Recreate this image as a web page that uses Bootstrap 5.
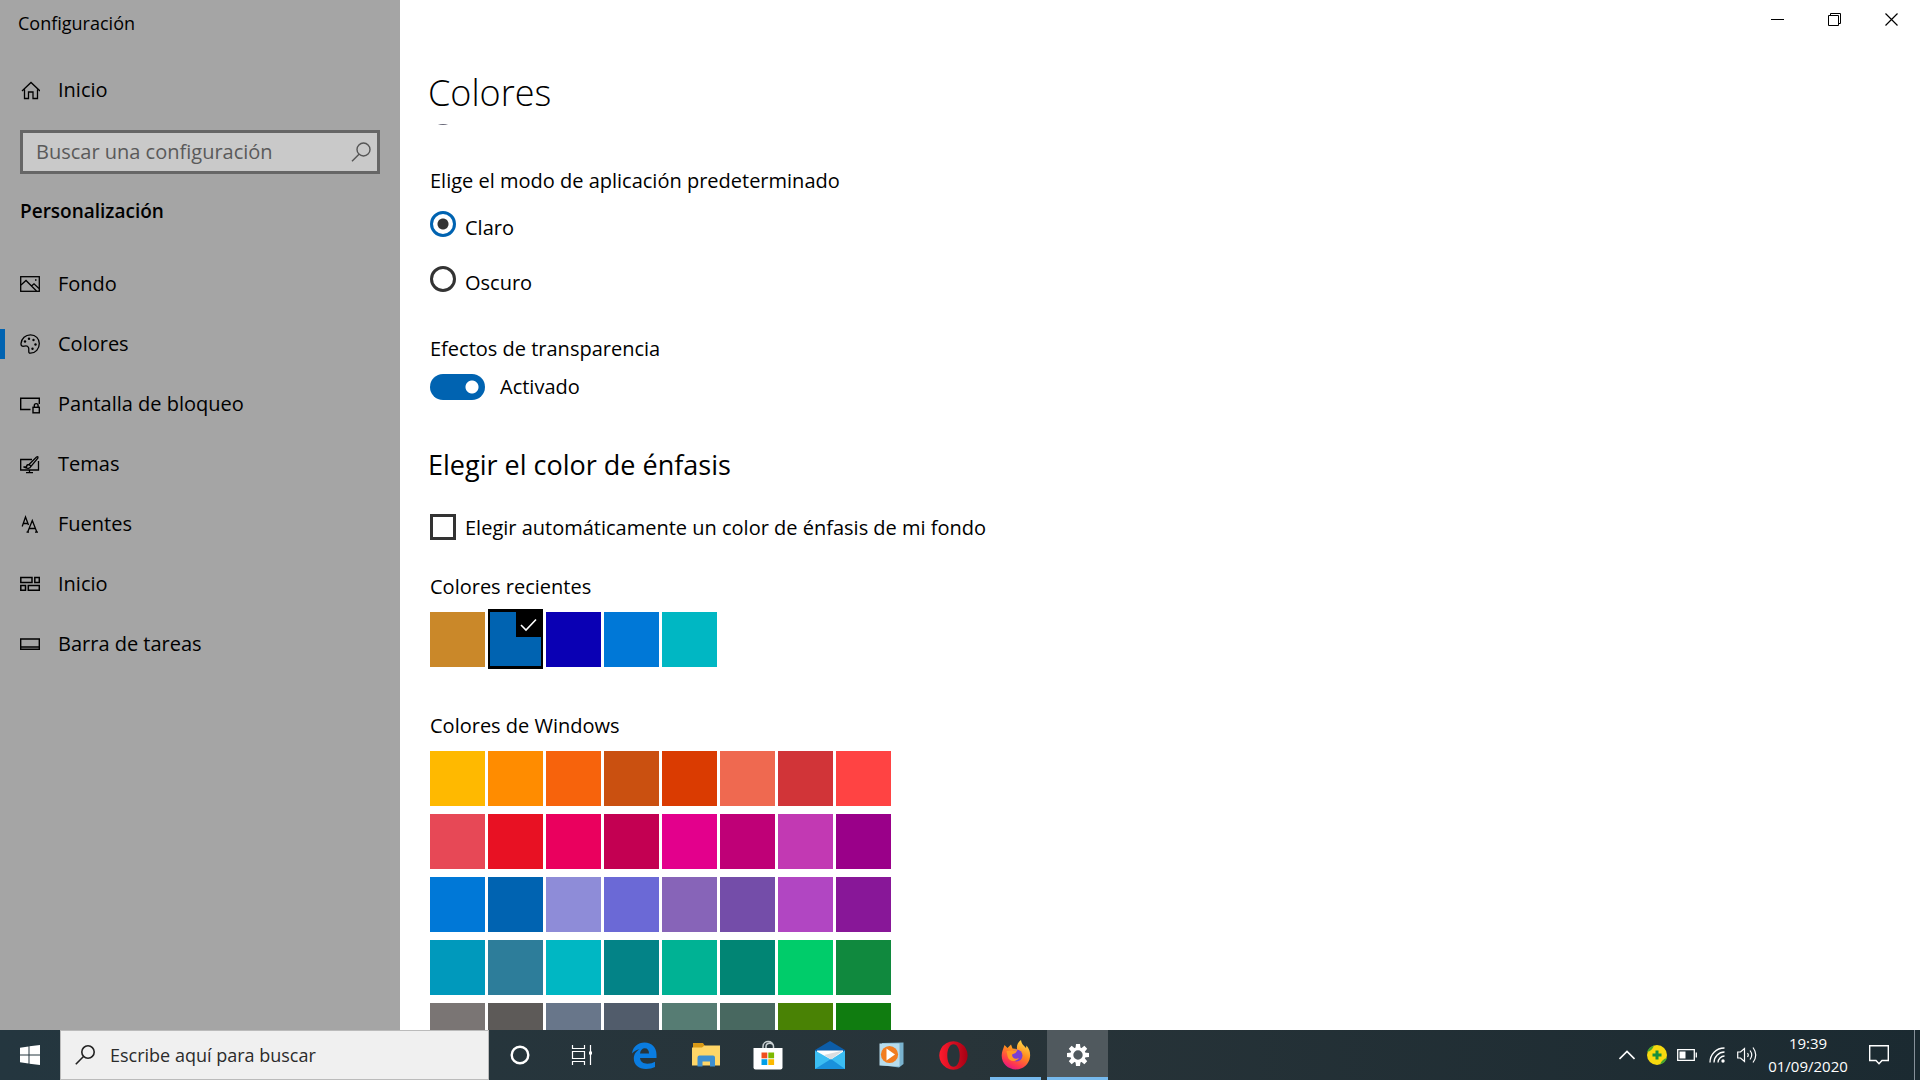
<!DOCTYPE html>
<html lang="es">
<head>
<meta charset="utf-8">
<meta name="viewport" content="width=device-width, initial-scale=1">
<title>Configuración</title>
<link href="https://cdn.jsdelivr.net/npm/bootstrap@5.3.0/dist/css/bootstrap.min.css" rel="stylesheet">
<style>
  :root { --accent: #0063b1; }
  body { font-family: "Open Sans", "Noto Sans", sans-serif; font-size: 20px; line-height: 26px; color: #000; background: #fff; }
  button { color: inherit; }
  svg { display: block; flex: none; }
  .stroke-icon { fill: none; stroke: currentColor; }

  .side-pane { width: 400px; background: #a5a5a5; flex: none; }
  .app-title { font-size: 18px; padding: 10px 18px 0; }
  .side-link { display: flex; align-items: center; gap: 18px; height: 60px; padding-left: 20px; color: #000; text-decoration: none; position: relative; }
  .side-link.home-link { margin-top: 24px; }
  .side-link.current::before { content: ""; position: absolute; left: 0; top: 15px; width: 5px; height: 30px; background: var(--accent); }
  .find-box { margin: 10px 20px 0; height: 44px; border: 3px solid #666; background: #c9c9c9; padding: 0 6px 0 13px; color: #555; }
  .find-box input, .task-find input { border: 0; background: transparent; outline: 0; padding: 0; min-width: 0; color: inherit; }
  .find-box input::placeholder { color: #5a5a5a; opacity: 1; }
  .side-heading { font-size: 19px; line-height: 26px; font-weight: 600; margin: 24px 20px 30px; }

  .win-btn { width: 57px; height: 38px; border: 0; background: transparent; }
  .page-title { font-size: 36px; line-height: 48px; font-weight: 300; margin: 31px 0 7px 28px; }
  .scroller { padding-left: 30px; }
  .cut-ring { width: 26px; height: 26px; border: 2px solid #667; border-radius: 50%; margin-top: -25px; }
  .mode-group { margin-top: 43px; }
  .field-label { margin: 0; font-size: 20px; line-height: 26px; font-weight: 400; }
  .mode-group .field-label { float: none; margin-bottom: 17px; }
  .opt-row { display: flex; gap: 9px; align-items: flex-start; height: 30px; }
  .opt-row + .opt-row { margin-top: 25px; }
  .opt-row label { padding-top: 4px; }
  .opt-row input { appearance: none; width: 26px; height: 26px; margin: 0; flex: none; border: 3px solid #333; background: #fff; }
  .opt-row input[type=radio] { border-radius: 50%; }
  .opt-row input[type=radio]:checked { border-color: var(--accent); background: radial-gradient(circle, #333 0 5px, #fff 6px); }
  .check-row { margin-top: 31px; }
  .opt-row.check-row label { padding-top: 1px; }
  .effects-group { margin-top: 40px; }
  .switch-row { margin-top: 12px; gap: 15px; }
  .switch-input { appearance: none; width: 55px; height: 26px; margin: 0; border-radius: 13px; background: radial-gradient(circle at 42px 13px, #fff 0 6px, var(--accent) 7px); flex: none; }
  .section-title { font-size: 27px; line-height: 36px; font-weight: 400; margin: 47px 0 0 -2px; }
  .recent-label { margin: 30px 0 12px; }
  .windows-label { margin: 46px 0 12px; }
  .swatches { display: grid; grid-template-columns: repeat(8, 55px); gap: 8px 3px; }
  .swatch { height: 55px; border: 0; padding: 0; position: relative; }
  .swatch.chosen { box-shadow: inset 2px 0 #000, inset -2px 0 #000, 0 -3px #000, 0 2px #000, inset 0 -1px #000; }
  .swatch .tick { position: absolute; top: 0; right: 2px; width: 25px; height: 25px; background: #000; color: #fff; }

  .task-bar { height: 50px; background: linear-gradient(90deg, #24363f, #283439 50%, #1b2a31); color: #fff; flex: none; }
  .start-btn { width: 60px; }
  .task-find { width: 429px; background: #f0f0f0; border: 1px solid #bbb; color: #222; padding-left: 14px; font-size: 18px; gap: 15px; }
  .task-find input::placeholder { color: #2b2b2b; opacity: 1; }
  .task-list { display: flex; gap: 1px; }
  .task-btn { width: 61px; }
  .task-btn, .tray-btn, .start-btn, .note-btn, .clock-btn { border: 0; background: transparent; padding: 0; display: flex; align-items: center; justify-content: center; position: relative; }
  .task-btn.running::after { content: ""; position: absolute; bottom: 0; left: 5px; right: 5px; height: 3px; background: #76b9ed; }
  .task-btn.focused { background: #50595e; }
  .task-btn.focused::after { left: 0; right: 0; }
  .tray-btn { width: 30px; }
  .clock-btn { width: 92px; flex-direction: column; font-size: 15px; line-height: 23px; }
  .note-btn { width: 50px; margin-right: 10px; }
  .peek { width: 6px; border-left: 1px solid #87919a; }
</style>
<script src="https://cdn.jsdelivr.net/npm/bootstrap@5.3.0/dist/js/bootstrap.bundle.min.js"></script>
</head>
<body>
<div class="d-flex flex-column vh-100 overflow-hidden">
  <div class="d-flex flex-grow-1 overflow-hidden">

    <aside class="side-pane">
      <div class="app-title">Configuración</div>
      <a class="side-link home-link" href="#inicio">
        <svg class="stroke-icon" width="20" height="20" viewBox="0 0 20 20" stroke-width="1.3"><path d="M2 11L11 2.500L20 11M4.500 9.500V18.500H8.500V12H13V18.500H17.500V9.500"/></svg>
        Inicio
      </a>
      <div class="find-box d-flex align-items-center">
        <input class="flex-grow-1" type="text" placeholder="Buscar una configuración" aria-label="Buscar una configuración">
        <svg class="stroke-icon" width="20" height="20" viewBox="0 0 20 20" stroke-width="1.4"><circle cx="12.500" cy="7.500" r="6.500"/><path d="M8 12.200L1 19.200"/></svg>
      </div>
      <h2 class="side-heading">Personalización</h2>
      <nav>
        <a class="side-link" href="#fondo">
          <svg class="stroke-icon" width="20" height="20" viewBox="0 0 20 20" stroke-width="1.300"><rect x=".7" y="2.700" width="18.600" height="14.600"/><path d="M1 11L6 6.500L16.500 17M11.500 12L14 9.800L19 14.500"/><path d="M15 6h1.500" stroke-width="1.500"/></svg>
          Fondo</a>
        <a class="side-link current" href="#colores" aria-current="page">
          <svg class="stroke-icon" width="20" height="20" viewBox="0 0 20 20" stroke-width="1.300"><path d="M1 9.500C1.500 4.500 5.500 .8 10.500 .8C15.700 .8 19.300 4.700 19.300 9.600C19.300 15 15.500 19.200 10.500 19.200C7.500 19.200 9.500 16 8.500 13.500C7.200 10.800 5.500 11.800 4 12.200C2 12.700 .8 11.500 1 9.500Z"/><g fill="currentColor" stroke="none"><circle cx="5" cy="7.500" r="1.200"/><circle cx="9" cy="4.800" r="1.200"/><circle cx="13.500" cy="6" r="1.200"/><circle cx="15.500" cy="10.500" r="1.200"/><circle cx="12.500" cy="14.800" r="1.200"/></g></svg>
          Colores</a>
        <a class="side-link" href="#bloqueo">
          <svg class="stroke-icon" width="20" height="20" viewBox="0 0 20 20" stroke-width="1.400"><path d="M10.500 15.500H.7V4.300H19.300V10"/><rect x="13" y="13.300" width="6.300" height="5.500"/><path d="M14.300 13V11.500a1.900 1.900 0 0 1 3.800 0V13"/></svg>
          Pantalla de bloqueo</a>
        <a class="side-link" href="#temas">
          <svg class="stroke-icon" width="20" height="20" viewBox="0 0 20 20" stroke-width="1.300"><path d="M12 5.500H.7V16H18.500V7M9.500 16V18.500M6 18.700H13"/><path d="M9 10.500L16.500 3Q18.500 2 17.800 4.200L11 12.300M9 10.500Q6.500 10.500 6.500 13H3.500Q9.500 16 11 12.300Z"/></svg>
          Temas</a>
        <a class="side-link" href="#fuentes">
          <svg class="stroke-icon" width="20" height="20" viewBox="0 0 20 20" stroke-width="1.300"><path d="M2.200 12.500L5.500 3L8.500 11M3.300 9.500H7.500M7.500 18.500L12.300 6.500L17 18.500M9 14.500H15.500M6.500 18.200H9M15 18.200H18"/></svg>
          Fuentes</a>
        <a class="side-link" href="#menu-inicio">
          <svg class="stroke-icon" width="20" height="20" viewBox="0 0 20 20" stroke-width="1.500"><path d="M.8 3.500H12V8.500H.8ZM14.800 3.500H19.300V8.500H14.800ZM.8 11.500H5.500V16.300H.8ZM8.300 11.500H19.300V16.300H8.300Z"/></svg>
          Inicio</a>
        <a class="side-link" href="#barra">
          <svg class="stroke-icon" width="20" height="20" viewBox="0 0 20 20" stroke-width="1.400"><path d="M.7 5H19.300V15.300H.7ZM.7 13H19.300"/></svg>
          Barra de tareas</a>
      </nav>
    </aside>

    <main class="flex-grow-1 d-flex flex-column overflow-hidden">
      <div class="d-flex justify-content-end">
        <button class="win-btn d-flex align-items-center justify-content-center" aria-label="Minimizar"><svg class="stroke-icon" width="13" height="13" viewBox="0 0 13 13"><path d="M0 6.500H13"/></svg></button>
        <button class="win-btn d-flex align-items-center justify-content-center" aria-label="Restaurar"><svg class="stroke-icon" width="13" height="13" viewBox="0 0 13 13"><path d="M.5 2.500H10.500V12.500H.5ZM2.500 2.500V.5H12.500V10.500H10.500"/></svg></button>
        <button class="win-btn d-flex align-items-center justify-content-center" aria-label="Cerrar"><svg class="stroke-icon" width="13" height="13" viewBox="0 0 13 13" stroke-width="1.200"><path d="M.5 .5L12.500 12.500M12.500 .5L.5 12.500"/></svg></button>
      </div>
      <h1 class="page-title">Colores</h1>
      <div class="scroller flex-grow-1 overflow-hidden">
        <div class="cut-ring"></div>
        <fieldset class="mode-group">
          <legend class="field-label">Elige el modo de aplicación predeterminado</legend>
          <div class="opt-row"><input type="radio" name="modo" id="claro" checked><label for="claro">Claro</label></div>
          <div class="opt-row"><input type="radio" name="modo" id="oscuro"><label for="oscuro">Oscuro</label></div>
        </fieldset>
        <div class="effects-group">
          <label class="field-label d-block" for="transparencia">Efectos de transparencia</label>
          <div class="d-flex align-items-center switch-row"><input class="switch-input" type="checkbox" role="switch" id="transparencia" checked><span>Activado</span></div>
        </div>
        <h2 class="section-title">Elegir el color de énfasis</h2>
        <div class="opt-row check-row"><input type="checkbox" id="auto"><label for="auto">Elegir automáticamente un color de énfasis de mi fondo</label></div>
        <h3 class="field-label recent-label">Colores recientes</h3>
        <div class="swatches" id="recent"></div>
        <h3 class="field-label windows-label">Colores de Windows</h3>
        <div class="swatches" id="palette"></div>
      </div>
    </main>
  </div>

  <footer class="task-bar d-flex">
    <button class="start-btn" aria-label="Inicio"><svg width="20" height="20" viewBox="0 0 20 20" fill="#fff"><path d="M0 2.800L8.500 1.500V9.500H0ZM9.500 1.300L20 0V9.500H9.500ZM0 10.500H8.500V18.500L0 17.300ZM9.500 10.500H20V20L9.500 18.700Z"/></svg></button>
    <div class="task-find d-flex align-items-center">
      <svg class="stroke-icon" width="20" height="20" viewBox="0 0 20 20" stroke-width="1.600"><circle cx="13" cy="7" r="6.200"/><path d="M8.500 11.500L.8 19.300"/></svg>
      <input class="flex-grow-1" type="text" placeholder="Escribe aquí para buscar" aria-label="Escribe aquí para buscar">
    </div>
    <div class="task-list">
      <button class="task-btn" aria-label="Cortana"><svg width="20" height="20" viewBox="0 0 20 20"><circle cx="10" cy="10" r="8.300" fill="none" stroke="#fff" stroke-width="2.400"/></svg></button>
      <button class="task-btn" aria-label="Vista de tareas"><svg class="stroke-icon" width="22" height="20" viewBox="0 0 22 20" stroke-width="1.200"><path d="M1.500 0V3.500H13.500V0M1.500 20V16.500H13.500V20M1.500 6.500H13.500V13.500H1.500ZM19.500 0V20"/><path d="M18 6.500H21V9.500H18Z" fill="#fff" stroke="none"/></svg></button>
      <button class="task-btn" aria-label="Edge"><svg width="26" height="27" viewBox="0 0 26 27"><path fill="#0a7ce0" d="M1 11.500C2 4.500 7 .5 13.500 .5C21 .5 25.500 5.500 25.500 12.500V16H9C9.300 19.800 12.500 21.700 16.300 21.700C19.500 21.700 22 20.900 24 19.700V25C21.500 26.300 18.500 27 15 27C7.500 27 2.800 22.800 2.800 16.500C2.800 12.500 5 9 8.700 7.200C5.500 7.700 3 9 1 11.500ZM9 11.500H18C18 8.300 16.500 6.300 13.800 6.300C11.200 6.300 9.500 8.300 9 11.500Z"/></svg></button>
      <button class="task-btn" aria-label="Explorador"><svg width="28" height="24" viewBox="0 0 28 24"><path fill="#d99a16" d="M1 0H11L13 3H27V8H1Z"/><path fill="#ffd667" d="M0 4.500H10L12.500 2.500H28V22.500H0Z"/><path fill="#3d8fd1" d="M5.500 23.500V14.500Q5.500 12.500 7.500 12.500H21Q23 12.500 23 14.500V23.500H18V18.500H10.500V23.500Z"/></svg></button>
      <button class="task-btn" aria-label="Tienda"><svg width="30" height="30" viewBox="0 0 30 30"><path d="M10 9V6.500C10 -.2 20.500 -.2 20.500 6.500V9M13 9V6.500C13 2 20.500 2 20.500 6.500" fill="none" stroke="#c9d0d2" stroke-width="1.500"/><path fill="#fff" d="M.5 8H29.500V27.500Q29.500 29.500 27.500 29.500H2.500Q.5 29.500 .5 27.500Z"/><path fill="#f04f1e" d="M8.500 12.500h5.800v5.800H8.500z"/><path fill="#7db800" d="M15.300 12.500h5.800v5.800h-5.800z"/><path fill="#00a0e8" d="M8.500 19.200h5.800V25H8.500z"/><path fill="#fcb900" d="M15.300 19.200h5.800V25h-5.800z"/></svg></button>
      <button class="task-btn" aria-label="Correo"><svg width="30" height="28" viewBox="0 0 30 28"><path fill="#0c5da8" d="M0 9L15 0L30 9V14H0Z"/><path fill="#fff" d="M2 9.500H28V20H2Z"/><path fill="#3bbdf2" d="M0 9.500L16 18.500L30 9.500V28H0Z"/><path fill="#1991dc" d="M0 28L16 18L30 28Z"/><path fill="#d9dde0" d="M9 14L28 9.500L16 18.500Z"/></svg></button>
      <button class="task-btn" aria-label="Reproductor"><svg width="25" height="26" viewBox="0 0 25 26"><path fill="#79b2ce" d="M3 1L24.500 .5V22L20 25.500L1 23Z"/><path fill="#b7dcec" d="M.5 1.500H20.500V24.500L.5 23.500Z"/><circle cx="10.500" cy="12.500" r="8.600" fill="#f27d20"/><path fill="#fff" d="M7.500 6.500L16 12.500L7.500 18.500Z"/></svg></button>
      <button class="task-btn" aria-label="Opera"><svg width="29" height="29" viewBox="0 0 29 29"><defs><linearGradient id="op" x2="1"><stop stop-color="#ff1b2d"/><stop offset="1" stop-color="#a70014"/></linearGradient></defs><path fill="url(#op)" fill-rule="evenodd" d="M14.500 .3A14.200 14.200 0 1 1 14.400 .3ZM14.500 3.300C10.800 3.300 8.300 8 8.300 14.500S10.800 25.800 14.500 25.800S20.700 21 20.700 14.500S18.200 3.300 14.500 3.300Z"/></svg></button>
      <button class="task-btn running" aria-label="Firefox"><svg width="30" height="30" viewBox="0 0 30 30"><defs><linearGradient id="fx" x1=".8" y1="0" x2=".3" y2="1"><stop stop-color="#ffe14d"/><stop offset=".45" stop-color="#ff8a1e"/><stop offset=".8" stop-color="#ff3750"/><stop offset="1" stop-color="#e31587"/></linearGradient></defs><path fill="url(#fx)" d="M3.500 5L6.500 8L10 4.500L11.500 8.500L16 9C15.500 5 17 2 20 0C20.500 4 22.500 5 25 8L25.500 5.500C28.500 9 29.500 12.500 29 17C28 24.500 22 29.500 15 29.500C7 29.500 .5 23.500 .7 15.500C.8 11 2.500 8.500 3.500 5Z"/><circle cx="15.500" cy="15.500" r="6" fill="#7a3fd5"/><path fill="#ff9a25" d="M5.500 11L16.500 10L14.500 13L11 14.500C11 18 14 20 18 18C15 22.500 7.500 22 6.500 16Z"/></svg></button>
      <button class="task-btn running focused" aria-label="Configuración"><svg width="22" height="22" viewBox="-11 -11 22 22"><g fill="#fff"><path id="cog" d="M-2 -11H2L2.600 -6H-2.600ZM-2 11H2L2.600 6H-2.600Z"/><use href="#cog" transform="rotate(45)"/><use href="#cog" transform="rotate(90)"/><use href="#cog" transform="rotate(135)"/></g><circle r="6.200" fill="none" stroke="#fff" stroke-width="3"/></svg></button>
    </div>
    <div class="d-flex ms-auto">
      <button class="tray-btn" aria-label="Mostrar iconos ocultos"><svg class="stroke-icon" width="16" height="10" viewBox="0 0 16 10" stroke-width="1.600"><path d="M.5 9L8 1.500L15.500 9"/></svg></button>
      <button class="tray-btn" aria-label="Antivirus"><svg width="20" height="20" viewBox="0 0 20 20"><circle cx="10" cy="10" r="10" fill="#f7d90f"/><path fill="#47a52f" d="M0 7A10 10 0 0 1 7 .5Q5 6 0 7ZM20 13A10 10 0 0 1 13 19.500Q15 14 20 13Z"/><path fill="#168f3c" d="M8.500 5.500H11.500V8.500H14.500V11.500H11.500V14.500H8.500V11.500H5.500V8.500H8.500Z"/></svg></button>
      <button class="tray-btn" aria-label="Batería"><svg class="stroke-icon" width="20" height="12" viewBox="0 0 20 12" stroke-width="1.300"><path d="M.7 .7H17.300V11.300H.7ZM19.300 3.500V8.500"/><path d="M2.500 2.500H8.500V9.500H2.500Z" fill="#fff" stroke="none"/></svg></button>
      <button class="tray-btn" aria-label="Red"><svg class="stroke-icon" width="16" height="16" viewBox="0 0 16 16" stroke-width="1.300"><path d="M1 15.500C1 7.500 7 1 15.500 1M5 15.500C5 10 9.500 5 15.500 5M9 15.500C9 12 12 9 15.500 9"/><circle cx="14" cy="14" r="1.700" fill="#fff" stroke="none"/></svg></button>
      <button class="tray-btn" aria-label="Volumen"><svg class="stroke-icon" width="20" height="18" viewBox="0 0 20 18" stroke-width="1.200"><path d="M.7 6H3.500L7.500 2.500V15.500L3.500 12H.7ZM10.500 7Q12 9 10.500 11M13 4.500Q16.500 9 13 13.500M16 1.500Q21.500 9 16 16.500"/></svg></button>
      <button class="clock-btn"><span>19:39</span><span>01/09/2020</span></button>
      <button class="note-btn" aria-label="Notificaciones"><svg class="stroke-icon" width="20" height="20" viewBox="0 0 20 20" stroke-width="1.400"><path d="M.7 .7H19.300V15.500H13L10 18.800L7 15.500H.7Z"/></svg></button>
      <div class="peek"></div>
    </div>
  </footer>
</div>
<script>
  const recent = ["#ca8829", "#0063b1", "#0a00b4", "#0078d7", "#00b7c3"];
  const palette = [
    "#ffb900", "#ff8c00", "#f7630c", "#ca5010", "#da3b01", "#ef6950", "#d13438", "#ff4343",
    "#e74856", "#e81123", "#ea005e", "#c30052", "#e3008c", "#bf0077", "#c239b3", "#9a0089",
    "#0078d7", "#0063b1", "#8e8cd8", "#6b69d6", "#8764b8", "#744da9", "#b146c2", "#881798",
    "#0099bc", "#2d7d9a", "#00b7c3", "#038387", "#00b294", "#018574", "#00cc6a", "#10893e",
    "#7a7574", "#5d5a58", "#68768a", "#515c6b", "#567c73", "#486860", "#498205", "#107c10"
  ];
  const tick = '<span class="tick"><svg class="stroke-icon" width="25" height="25" viewBox="0 0 25 25" stroke-width="1.600"><path d="M5 13L10 18L20 7.500"/></svg></span>';
  const draw = (id, list, chosen) => {
    document.getElementById(id).innerHTML = list.map((c, i) =>
      `<button class="swatch${i === chosen ? " chosen" : ""}" aria-label="${c}" style="background:${c}">${i === chosen ? tick : ""}</button>`).join("");
  };
  draw("recent", recent, 1);
  draw("palette", palette, -1);
</script>
</body>
</html>
